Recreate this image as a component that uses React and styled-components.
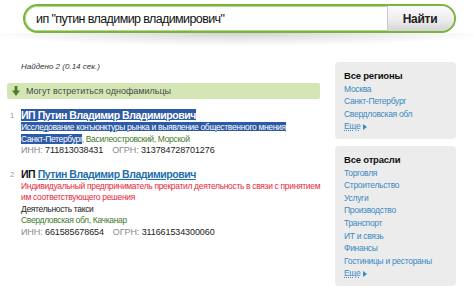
import React from "react";
import styled, { createGlobalStyle } from "styled-components";

const Global = createGlobalStyle`
  html, body { margin: 0; padding: 0; background: #fff; }
  body { font-family: "Liberation Sans", Arial, sans-serif; }
`;

const Page = styled.div`
  width: 474px;
  height: 300px;
  overflow: hidden;
  background: #fff;
`;

const Header = styled.div`
  padding: 4px 18px 0 23px;
`;

const SearchBar = styled.div`
  display: flex;
  height: 29px;
  box-sizing: border-box;
  border: 2px solid #79b43f;
  border-radius: 15px;
  overflow: hidden;
  background: #fff;
  box-shadow: inset 0 0 0 1px #b5da8a;
`;

const SearchInput = styled.div`
  flex: 1;
  display: flex;
  align-items: center;
  padding-left: 11px;
  font-size: 12.5px;
  letter-spacing: -0.6px;
  color: #111;
`;

const SearchButton = styled.div`
  width: 64px;
  display: flex;
  align-items: center;
  justify-content: center;
  padding-right: 2px;
  border-left: 1px solid #c9c9c9;
  background: linear-gradient(to bottom, #fbfbfb 0%, #ededed 55%, #d4d4d4 100%);
  font-size: 12px;
  font-weight: bold;
  letter-spacing: -0.3px;
  color: #222;
`;

const BarShadow = styled.div`
  height: 13px;
  background: radial-gradient(ellipse 54% 100% at 50% 0%, #d2d2d2 0%, #e8e8e8 45%, rgba(255,255,255,0) 100%);
`;

const Main = styled.div`
  display: flex;
  align-items: flex-start;
`;

const Content = styled.div`
  width: 328px;
  padding-left: 7px;
  padding-top: 15px;
  box-sizing: border-box;
`;

const Found = styled.div`
  padding-left: 14px;
  font-size: 8px;
  font-style: italic;
  line-height: 11px;
  color: #333;
`;

const Notice = styled.div`
  margin-top: 11px;
  width: 313px;
  height: 16px;
  box-sizing: border-box;
  display: flex;
  align-items: center;
  gap: 6px;
  padding-left: 5px;
  background: #d3e6b4;
  border-radius: 2px;
  font-size: 9px;
  color: #4a4a4a;
`;

const Results = styled.ol`
  list-style: none;
  margin: 10px 0 0 0;
  padding: 0;
  display: flex;
  flex-direction: column;
  gap: 11px;
`;

const Result = styled.li`
  display: flex;
`;

const Num = styled.span`
  width: 14px;
  flex: none;
  font-size: 7.5px;
  color: #999;
  line-height: 13px;
  padding-left: 3px;
  box-sizing: border-box;
`;

const Body = styled.div`
  display: flex;
  flex-direction: column;
  line-height: 11.5px;
`;

const Title = styled.div`
  font-size: 10.5px;
  font-weight: bold;
  letter-spacing: -0.45px;
  line-height: 13px;
  color: #111;
`;

const Sel = styled.span`
  background: ${(p) => (p.$on ? "#2d5aa6" : "transparent")};
  color: ${(p) => (p.$on ? "#fff" : "inherit")};
`;

const TitleLink = styled.a`
  color: ${(p) => (p.$sel ? "#fff" : "#1f6fae")};
  text-decoration: underline;
  text-decoration-thickness: 1px;
  text-underline-offset: 1px;
`;

const Line = styled.div`
  color: ${(p) => p.$color || "#222"};
  font-size: ${(p) => (p.$codes ? "9px" : "8.5px")};
  letter-spacing: ${(p) => (p.$codes ? "-0.1px" : "-0.33px")};
  white-space: nowrap;
`;

const DescLink = styled.span`
  text-decoration: underline;
  text-underline-offset: 1px;
`;

const Label = styled.span`
  color: #8a8a8a;
`;

const Value = styled.span`
  color: #222;
  margin-right: ${(p) => (p.$gap ? "9px" : "0")};
`;

const Side = styled.div`
  margin-left: 7px;
  width: 121px;
  padding-top: 16px;
  display: flex;
  flex-direction: column;
  gap: 7px;
`;

const Panel = styled.div`
  background: #ececec;
  border-radius: 4px;
  padding: 8px 8px 6px 9px;
  font-size: 8.5px;
  letter-spacing: -0.3px;
  line-height: 12.6px;
`;

const PanelTitle = styled.div`
  font-weight: bold;
  color: #111;
  font-size: 9.5px;
  letter-spacing: -0.2px;
`;

const PanelLink = styled.a`
  display: block;
  height: 12.6px;
  color: #3a8ac2;
  text-decoration: none;
  white-space: nowrap;
`;

const More = styled(PanelLink)`
  display: flex;
  align-items: center;
  gap: 3px;
`;

const MoreText = styled.span`
  text-decoration: underline;
  text-decoration-style: dotted;
`;

const ArrowDown = () => (
  <svg width="8" height="10" viewBox="0 0 8 10">
    <rect x="2.6" y="0" width="2.8" height="5" fill="#4e7d2a" />
    <polygon points="0,4.5 8,4.5 4,10" fill="#4e7d2a" />
  </svg>
);

const Tri = () => (
  <svg width="4" height="6" viewBox="0 0 4 6">
    <polygon points="0,0 4,3 0,6" fill="#3a8ac2" />
  </svg>
);

const regions = ["Москва", "Санкт-Петербург", "Свердловская обл"];
const branches = [
  "Торговля",
  "Строительство",
  "Услуги",
  "Производство",
  "Транспорт",
  "ИТ и связь",
  "Финансы",
  "Гостиницы и рестораны",
];

export default function App() {
  return (
    <Page>
      <Global />
      <Header>
        <SearchBar>
          <SearchInput>ип "путин владимир владимирович"</SearchInput>
          <SearchButton>Найти</SearchButton>
        </SearchBar>
      </Header>
      <BarShadow />
      <Main>
        <Content>
          <Found>Найдено 2 (0.14 сек.)</Found>
          <Notice>
            <ArrowDown />
            Могут встретиться однофамильцы
          </Notice>
          <Results>
            <Result>
              <Num>1</Num>
              <Body>
                <Title>
                  <Sel $on>
                    ИП <TitleLink $sel>Путин Владимир Владимирович</TitleLink>
                  </Sel>
                </Title>
                <Line>
                  <Sel $on>
                    <DescLink>Исследование конъюнктуры рынка и выявление общественного мнения</DescLink>
                  </Sel>
                </Line>
                <Line $color="#3f7a2c">
                  <Sel $on>Санкт-Петербург</Sel>, Василеостровский, Морской
                </Line>
                <Line $codes>
                  <Label>ИНН: </Label>
                  <Value $gap>711813038431</Value>
                  <Label>ОГРН: </Label>
                  <Value>313784728701276</Value>
                </Line>
              </Body>
            </Result>
            <Result>
              <Num>2</Num>
              <Body>
                <Title>
                  ИП <TitleLink>Путин Владимир Владимирович</TitleLink>
                </Title>
                <Line $color="#e8293d">
                  Индивидуальный предприниматель прекратил деятельность в связи с принятием
                </Line>
                <Line $color="#e8293d">им соответствующего решения</Line>
                <Line>Деятельность такси</Line>
                <Line $color="#3f7a2c">Свердловская обл, Качканар</Line>
                <Line $codes>
                  <Label>ИНН: </Label>
                  <Value $gap>661585678654</Value>
                  <Label>ОГРН: </Label>
                  <Value>311661534300060</Value>
                </Line>
              </Body>
            </Result>
          </Results>
        </Content>
        <Side>
          <Panel>
            <PanelTitle>Все регионы</PanelTitle>
            {regions.map((r) => (
              <PanelLink key={r}>{r}</PanelLink>
            ))}
            <More>
              <MoreText>Еще</MoreText>
              <Tri />
            </More>
          </Panel>
          <Panel>
            <PanelTitle>Все отрасли</PanelTitle>
            {branches.map((r) => (
              <PanelLink key={r}>{r}</PanelLink>
            ))}
            <More>
              <MoreText>Еще</MoreText>
              <Tri />
            </More>
          </Panel>
        </Side>
      </Main>
    </Page>
  );
}
